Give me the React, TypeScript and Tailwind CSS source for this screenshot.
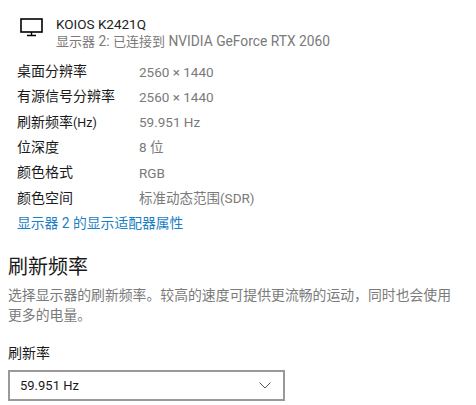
const font = 'font-["Roboto","Noto_Sans_CJK_SC",sans-serif]';

const rows = [
  { label: <>桌面分辨率</>, value: '2560 × 1440' },
  { label: <>有源信号分辨率</>, value: '2560 × 1440' },
  { label: <>刷新频率<span className="text-[12.5px]">(Hz)</span></>, value: '59.951 Hz' },
  { label: <>位深度</>, value: '8 位' },
  { label: <>颜色格式</>, value: 'RGB' },
  { label: <>颜色空间</>, value: '标准动态范围(SDR)' },
];

export default function App() {
  return (
    <div className={`w-[476px] h-[405px] overflow-hidden bg-white text-[14px] text-[#1a1a1a] ${font}`}>
      {/* Monitor header */}
      <div className="flex pl-[20px] pt-[16px]">
        <svg width="24" height="20" viewBox="0 0 24 20" className="mt-[2px] text-black" fill="none" stroke="currentColor">
          <rect x="1" y="1" width="21" height="13" strokeWidth="1.6" />
          <path d="M11.5 14v3M7 17.5h9" strokeWidth="1.4" />
        </svg>
        <div className="ml-[12px]">
          <p className="h-[17px] text-[13.5px] leading-[17px] text-[#222]">KOIOS K2421Q</p>
          <p className="h-[17px] text-[13.8px] leading-[17px] text-[#7a7a7a]">
            <span className="text-[13px]">显示器</span> 2: <span className="text-[13px]">已连接到</span> NVIDIA GeForce RTX 2060
          </p>
        </div>
      </div>

      {/* Details */}
      <div className="pl-[17px] pt-[9px]">
        {rows.map((row, i) => (
          <div key={i} className="flex h-[25.3px] items-center">
            <span className="w-[122px]">{row.label}</span>
            <span className="text-[13.5px] text-[#7a7a7a]">{row.value}</span>
          </div>
        ))}
        <a className="flex h-[25.3px] items-center text-[13.8px] text-[#1a7fc4]">显示器 2 的显示适配器属性</a>
      </div>

      {/* Refresh rate */}
      <div className="pl-[8px] pt-[16px]">
        <h2 className="h-[30px] text-[20px] leading-[30px] text-[#1a1a1a]">刷新频率</h2>
        <p className="mt-[3px] w-[450px] text-[13.85px] leading-[20px] text-[#7a7a7a]">
          选择显示器的刷新频率。较高的速度可提供更流畅的运动{'\uFF0C'}同时也会使用更多的电量。
        </p>
        <p className="mt-[18px] h-[20px] leading-[20px]">刷新率</p>
        <div className="mt-[7px] flex h-[31px] w-[277px] items-center justify-between border-2 border-[#999999] pl-[10px] pr-[12px]">
          <span className="text-[13px]">59.951 Hz</span>
          <svg width="12" height="7" viewBox="0 0 12 7" fill="none" stroke="#555555" strokeWidth="1">
            <path d="M.5.5 6 6l5.5-5.5" />
          </svg>
        </div>
      </div>
    </div>
  );
}
